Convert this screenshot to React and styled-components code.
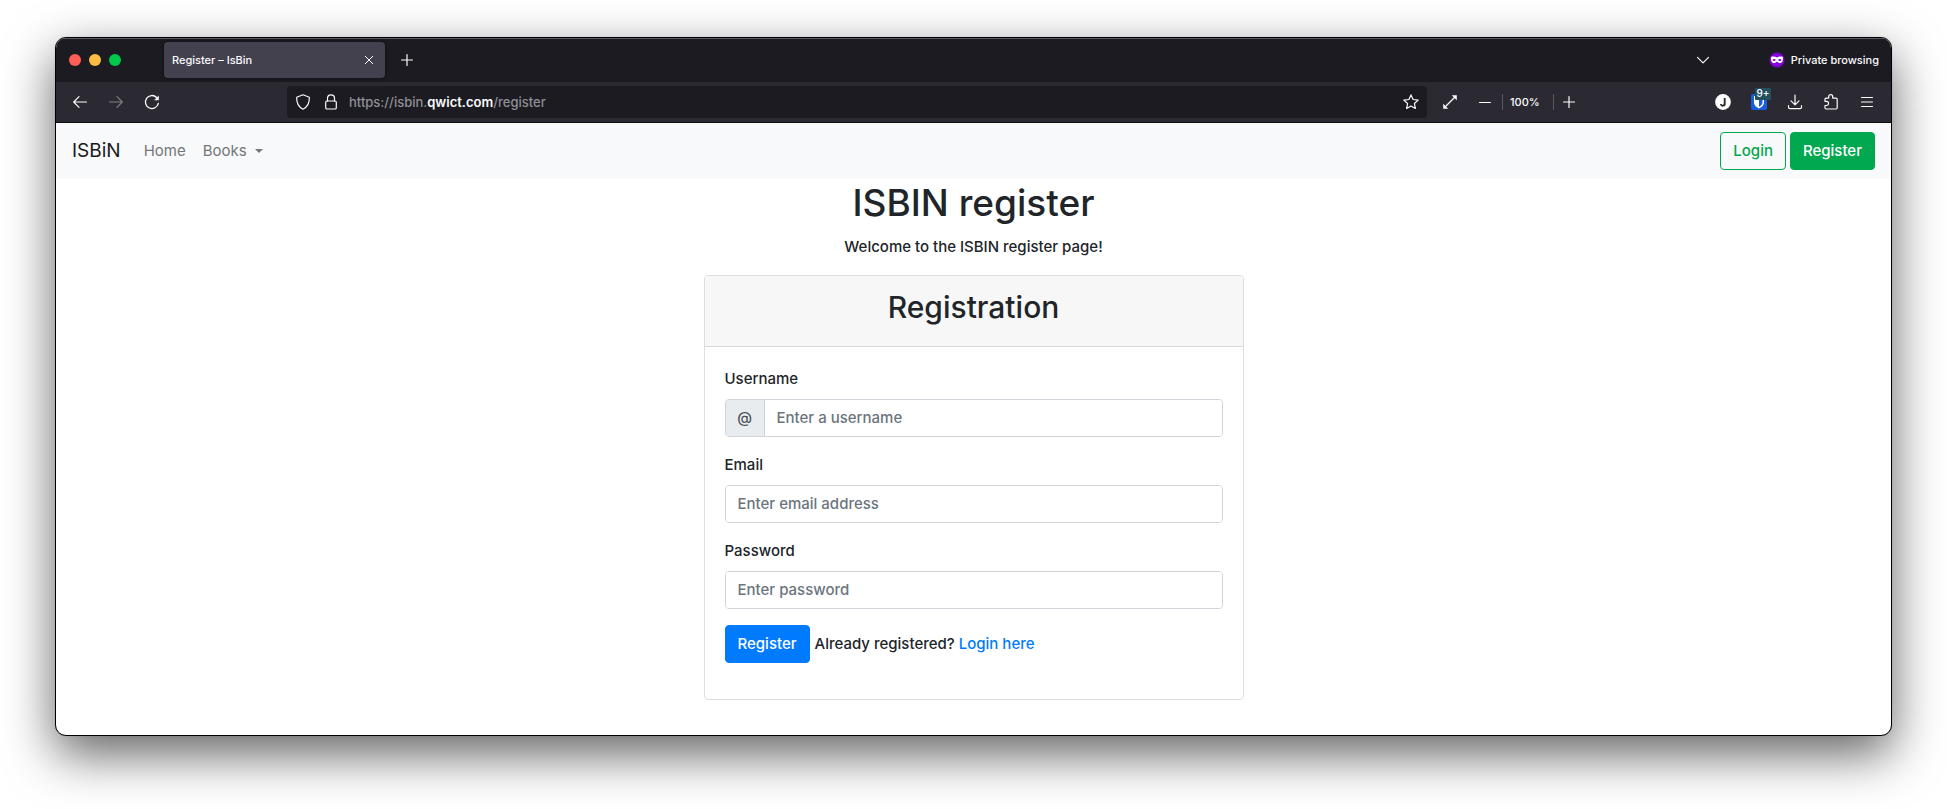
import React from 'react';
import styled, { createGlobalStyle } from 'styled-components';

const GlobalStyle = createGlobalStyle`
  *, *::before, *::after { box-sizing: border-box; }
  body {
    margin: 0;
    background: #fff;
    color: #212529;
    font-family: Inter, "Liberation Sans", sans-serif;
    font-size: 15px;
    font-weight: 500;
    line-height: 24px;
  }
  button, input { font: inherit; }
`;

const Desktop = styled.div`
  min-height: 100vh;
  padding: 37px 55px 73px;
  display: flex;
`;

const Window = styled.div`
  flex: 1;
  display: flex;
  flex-direction: column;
  border: 1px solid #000;
  border-radius: 11px;
  background: #fff;
  overflow: hidden;
  box-shadow: 0 18px 50px rgba(0, 0, 0, 0.62), 0 0 1px rgba(0, 0, 0, 0.3);
`;

const TabStrip = styled.div`
  height: 44px;
  padding: 0 12px 0 13px;
  display: flex;
  align-items: center;
  background: #1c1b22;
  box-shadow: inset 0 1px #5b5b60;
  color: #fbfbfe;
  font-size: 11px;
  line-height: 16px;
`;

const Lights = styled.div`
  display: flex;
  gap: 8px;
  margin-right: 43px;
`;

const Light = styled.button`
  width: 12px;
  height: 12px;
  padding: 0;
  border: 0;
  border-radius: 50%;
  background: ${(p) => p.$color};
`;

const Tab = styled.div`
  width: 221px;
  height: 36px;
  padding: 0 8px;
  display: flex;
  align-items: center;
  justify-content: space-between;
  border-radius: 4px;
  background: #42414d;
  box-shadow: 0 0 4px rgba(0, 0, 0, 0.5);
`;

const IconButton = styled.button`
  width: ${(p) => p.$w || 36}px;
  height: 32px;
  padding: 0;
  flex: none;
  display: flex;
  align-items: center;
  justify-content: center;
  border: 0;
  background: none;
  color: inherit;
  opacity: ${(p) => (p.$dim ? 0.4 : 1)};
`;

const TabSpacer = styled.div`
  flex: 1;
`;

const PrivateLabel = styled.div`
  display: flex;
  align-items: center;
  gap: 6px;
  margin-left: 48px;
`;

const Toolbar = styled.div`
  height: 41px;
  padding: 0 6px;
  display: flex;
  align-items: center;
  background: #2b2a33;
  border-bottom: 1px solid #0c0c0d;
  color: #fbfbfe;
`;

const AddressBar = styled.div`
  flex: 1;
  height: 32px;
  margin: 0 5px 0 117px;
  display: flex;
  align-items: center;
  border-radius: 4px;
  background: #1c1b22;
`;

const Address = styled.div`
  flex: 1;
  margin-left: 6px;
  color: #8f8f96;
  font-size: 13px;
  line-height: 20px;
  b { color: #fbfbfe; font-weight: 600; }
`;

const ZoomGroup = styled.div`
  display: flex;
  align-items: center;
  margin-right: 121px;
`;

const ZoomLevel = styled.button`
  width: 52px;
  height: 16px;
  padding: 0 14px 0 7px;
  border: solid #5b5a63;
  border-width: 0 1px;
  background: none;
  color: inherit;
  font-size: 11px;
  line-height: 16px;
`;

const Navbar = styled.nav`
  height: 56px;
  padding: 0 16px;
  display: flex;
  align-items: center;
  background: #f8f9fa;
  font-weight: 400;
`;

const Brand = styled.a`
  margin-right: 23px;
  color: #18191a;
  font-size: 19px;
  line-height: 30px;
  text-decoration: none;
`;

const NavItem = styled.a`
  display: flex;
  align-items: center;
  gap: 8px;
  margin-right: 17px;
  color: #757676;
  text-decoration: none;
`;

const Caret = styled.span`
  border: 4px solid transparent;
  border-top-color: currentColor;
  border-bottom: 0;
`;

const NavActions = styled.div`
  display: flex;
  gap: 4px;
  margin-left: auto;
`;

const Button = styled.button`
  height: 38px;
  padding: 0 12px;
  border: 1px solid ${(p) => p.$color};
  border-radius: 4px;
  background: ${(p) => (p.$outline ? 'transparent' : p.$color)};
  color: ${(p) => (p.$outline ? p.$color : '#fff')};
  font-weight: 500;
`;

const Page = styled.main`
  width: 540px;
  margin: 0 auto;
  padding-bottom: 35px;
`;

const Title = styled.h1`
  margin: 0 0 8px;
  font-size: 37px;
  font-weight: 500;
  line-height: 48px;
  text-align: center;
`;

const Lead = styled.p`
  margin: 0 0 16px;
  text-align: center;
`;

const Card = styled.section`
  border: 1px solid #dfdfdf;
  border-radius: 4px;
  overflow: hidden;
`;

const CardHeader = styled.header`
  padding: 12px 20px 20px;
  background: #f7f7f7;
  border-bottom: 1px solid #d9d9d9;
  text-align: center;
`;

const CardTitle = styled.h2`
  margin: 0;
  font-size: 30px;
  font-weight: 500;
  line-height: 38px;
`;

const Form = styled.form`
  padding: 20px 20px 36px;
`;

const Field = styled.div`
  margin-bottom: 16px;
  label { display: block; margin-bottom: 8px; }
`;

const InputGroup = styled.div`
  height: 38px;
  display: flex;
  border: 1px solid #ced4da;
  border-radius: 4px;
  overflow: hidden;
`;

const Prefix = styled.span`
  width: 39px;
  display: flex;
  align-items: center;
  justify-content: center;
  border-right: 1px solid #ced4da;
  background: #e9ecef;
  color: #495057;
`;

const Input = styled.input`
  flex: 1;
  min-width: 0;
  padding: 0 12px;
  border: 0;
  outline: 0;
  background: #fff;
  color: #495057;
  &::placeholder { color: #6c757d; opacity: 1; }
`;

const FormActions = styled.div`
  display: flex;
  align-items: center;
  gap: 5px;
  a { color: #007bff; text-decoration: none; }
`;

function Icon({ size = 16, children, ...rest }) {
  return (
    <svg width={size} height={size} viewBox="0 0 16 16" fill="none" stroke="currentColor"
      strokeWidth="1.2" strokeLinecap="round" strokeLinejoin="round" aria-hidden="true" {...rest}>
      {children}
    </svg>
  );
}

function FormField({ id, label, prefix, ...input }) {
  return (
    <Field>
      <label htmlFor={id}>{label}</label>
      <InputGroup>
        {prefix && <Prefix>{prefix}</Prefix>}
        <Input id={id} {...input} />
      </InputGroup>
    </Field>
  );
}

function Browser({ children }) {
  return (
    <Window>
      <TabStrip>
        <Lights>
          <Light $color="#ff5f57" aria-label="Close window" />
          <Light $color="#febc40" aria-label="Minimize window" />
          <Light $color="#00c84c" aria-label="Zoom window" />
        </Lights>
        <Tab>
          <span>Register – IsBin</span>
          <IconButton $w={16} aria-label="Close tab">
            <Icon><path d="M4.200 4.200l7.600 7.600M11.800 4.200l-7.600 7.600" strokeWidth="1" /></Icon>
          </IconButton>
        </Tab>
        <IconButton $w={44} aria-label="New tab">
          <Icon><path d="M8 2.500v11M2.500 8h11" /></Icon>
        </IconButton>
        <TabSpacer />
        <IconButton aria-label="List all tabs">
          <Icon><path d="M2.500 5.300L8 10.800l5.500-5.500" /></Icon>
        </IconButton>
        <PrivateLabel>
          <Icon stroke="none">
            <circle cx="8" cy="8" r="7.600" fill="#8000d7" />
            <path fill="#fff" d="M2 5c2-.8 4.500-.6 6 .5C9.500 4.400 12 4.200 14 5c.3 3.500-.5 6.200-3 6.200-1.600 0-2-1.400-3-1.400s-1.400 1.400-3 1.400c-2.500 0-3.300-2.700-3-6.200z" />
            <ellipse cx="5.200" cy="8" rx="1.500" ry="1" fill="#8000d7" />
            <ellipse cx="10.800" cy="8" rx="1.500" ry="1" fill="#8000d7" />
          </Icon>
          Private browsing
        </PrivateLabel>
      </TabStrip>
      <Toolbar>
        <IconButton aria-label="Back">
          <Icon><path d="M14.500 8H1.800M7 2.700L1.700 8 7 13.300" /></Icon>
        </IconButton>
        <IconButton $dim aria-label="Forward">
          <Icon><path d="M1.500 8h12.700M9 2.700L14.300 8 9 13.300" /></Icon>
        </IconButton>
        <IconButton aria-label="Reload">
          <Icon>
            <path d="M14.300 9.300A6.500 6.500 0 1 1 12.600 3.500" strokeWidth="1.300" />
            <path d="M14.800 1.500v4.700h-4.700z" fill="currentColor" stroke="none" />
          </Icon>
        </IconButton>
        <AddressBar>
          <IconButton $w={32} aria-label="Tracking protection">
            <Icon><path d="M8 .8l6.300 2.400c.3 5-1.300 9.300-6.300 12C3 12.500 1.400 8.200 1.700 3.200z" /></Icon>
          </IconButton>
          <IconButton $w={24} aria-label="Site information">
            <Icon>
              <rect x="2.700" y="7" width="10.600" height="8" rx="1.300" />
              <path d="M4.500 7V4.300a3.500 3.500 0 0 1 7 0V7" />
            </Icon>
          </IconButton>
          <Address>https://isbin.<b>qwict.com</b>/register</Address>
          <IconButton $w={32} aria-label="Bookmark this page">
            <Icon><path d="M8 .9l2.100 4.600 5.100.6-3.800 3.400 1 5L8 12l-4.400 2.500 1-5L.8 6.100l5.100-.6z" /></Icon>
          </IconButton>
        </AddressBar>
        <ZoomGroup>
          <IconButton aria-label="Full screen">
            <Icon>
              <path d="M3.500 12.500l9-9" />
              <path d="M9.800 1.200h5v5zM6.200 14.800h-5v-5z" fill="currentColor" stroke="none" />
            </Icon>
          </IconButton>
          <IconButton $w={34} aria-label="Zoom out">
            <Icon><path d="M2.500 8.500h11" /></Icon>
          </IconButton>
          <ZoomLevel>100%</ZoomLevel>
          <IconButton $w={30} aria-label="Zoom in">
            <Icon><path d="M8 2.500v11M2.500 8h11" /></Icon>
          </IconButton>
        </ZoomGroup>
        <IconButton aria-label="Account">
          <Icon stroke="none">
            <circle cx="8" cy="8" r="7.900" fill="#fff" />
            <path d="M9.700 4v5.500a1.900 1.900 0 0 1-3.800.5" stroke="#2b2a33" strokeWidth="1.900" strokeLinecap="butt" />
          </Icon>
        </IconButton>
        <IconButton aria-label="Bitwarden">
          <svg width="28" height="28" viewBox="0 0 28 28" aria-hidden="true">
            <rect x="6" y="6" width="16" height="16" rx="2" fill="#175ddc" />
            <path d="M9 8h10v6.500c0 2.500-2 4.600-5 6-3-1.400-5-3.500-5-6z" fill="#fff" />
            <path d="M14 9.500h3.500v5c0 1.700-1.300 3.200-3.500 4.300z" fill="#175ddc" />
            <rect x="10" y="0" width="16" height="12" rx="1" fill="#23505f" />
            <text x="18" y="9" fill="#fff" fontSize="10" fontWeight="500" textAnchor="middle">9+</text>
          </svg>
        </IconButton>
        <IconButton aria-label="Downloads">
          <Icon><path d="M8 1v9.500M4 6.800l4 4 4-4M1.500 11.500v1.800c0 .8.600 1.400 1.400 1.400h10.200c.8 0 1.400-.6 1.400-1.400v-1.800" /></Icon>
        </IconButton>
        <IconButton aria-label="Extensions">
          <Icon><path d="M2 7.200V5.300c0-.7.500-1.200 1.200-1.200h2.500V2.700a2 2 0 0 1 4 0v1.400h3.300c.7 0 1.200.5 1.200 1.200v8.500c0 .7-.5 1.200-1.200 1.200H3.200c-.7 0-1.200-.5-1.200-1.200v-2.300h1.500a2 2 0 0 0 0-4.100H2z" /></Icon>
        </IconButton>
        <IconButton aria-label="Open application menu">
          <Icon><path d="M2.500 3.500h11M2.500 8h11M2.500 12.500h11" /></Icon>
        </IconButton>
      </Toolbar>
      {children}
    </Window>
  );
}

export default function App() {
  return (
    <>
      <GlobalStyle />
      <Desktop>
        <Browser>
          <Navbar>
            <Brand href="#">ISBiN</Brand>
            <NavItem href="#">Home</NavItem>
            <NavItem href="#">Books <Caret /></NavItem>
            <NavActions>
              <Button $outline $color="#02a84f">Login</Button>
              <Button $color="#02a84f">Register</Button>
            </NavActions>
          </Navbar>
          <Page>
            <Title>ISBIN register</Title>
            <Lead>Welcome to the ISBIN register page!</Lead>
            <Card>
              <CardHeader>
                <CardTitle>Registration</CardTitle>
              </CardHeader>
              <Form>
                <FormField id="username" label="Username" prefix="@" type="text" placeholder="Enter a username" />
                <FormField id="email" label="Email" type="email" placeholder="Enter email address" />
                <FormField id="password" label="Password" type="password" placeholder="Enter password" />
                <FormActions>
                  <Button type="submit" $color="#007bff">Register</Button>
                  <span>Already registered? <a href="#">Login here</a></span>
                </FormActions>
              </Form>
            </Card>
          </Page>
        </Browser>
      </Desktop>
    </>
  );
}
